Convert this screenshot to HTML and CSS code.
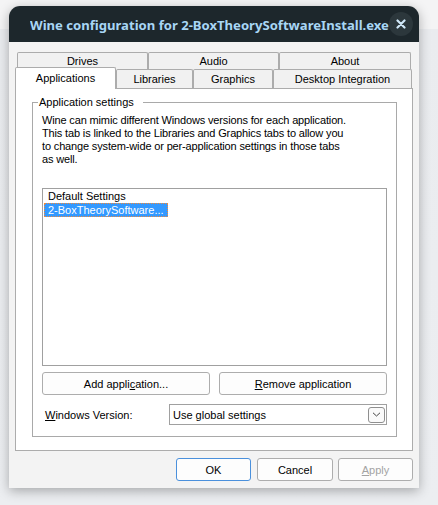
FILE: index.html
```
<!DOCTYPE html>
<html>
<head>
<meta charset="utf-8">
<link rel="stylesheet" href="styles.css">
</head>
<body>
<div class="desk">
  <div class="window">
    <div class="titlebar">
      <span class="title">Wine configuration for 2-BoxTheorySoftwareInstall.exe</span>
      <span class="close"><svg width="10" height="10" viewBox="0 0 10 10"><path d="M1.5 1.5 L8.5 8.5 M8.5 1.5 L1.5 8.5" stroke="#cfe6f7" stroke-width="2.2" stroke-linecap="round"/></svg></span>
    </div>
    <div class="content">
      <div class="tabs">
        <div class="tabrow back">
          <div class="tab tab-back w131">Drives</div>
          <div class="tab tab-back w131">Audio</div>
          <div class="tab tab-back w132">About</div>
        </div>
        <div class="tabrow front">
          <div class="tab tab-front sel w101">Applications</div>
          <div class="tab tab-front w77">Libraries</div>
          <div class="tab tab-front w80">Graphics</div>
          <div class="tab tab-front w139">Desktop Integration</div>
        </div>
      </div>
      <div class="panel">
        <div class="group">
          <span class="legend">Application settings</span>
          <p class="desc">Wine can mimic different Windows versions for each application.<br>This tab is linked to the Libraries and Graphics tabs to allow you<br>to change system-wide or per-application settings in those tabs<br>as well.</p>
          <div class="listbox">
            <div class="item">Default Settings</div>
            <div class="item selected">2-BoxTheorySoftware...</div>
          </div>
          <div class="btnrow">
            <button class="btn wide">Add appli<u>c</u>ation...</button>
            <button class="btn wide"><u>R</u>emove application</button>
          </div>
          <div class="verrow">
            <span class="verlabel"><u>W</u>indows Version:</span>
            <div class="combo">
              <span class="combotext">Use global settings</span>
              <span class="dropbtn"><svg width="9" height="5" viewBox="0 0 9 5"><path d="M1 0.8 L4.5 4 L8 0.8" fill="none" stroke="#444" stroke-width="1"/></svg></span>
            </div>
          </div>
        </div>
      </div>
      <div class="footer">
        <button class="btn ok">OK</button>
        <button class="btn cancel">Cancel</button>
        <button class="btn apply"><u>A</u>pply</button>
      </div>
    </div>
  </div>
</div>
</body>
</html>
```
FILE: styles.css
```
html, body {
  margin: 0;
  padding: 0;
}
body {
  width: 438px;
  height: 505px;
  overflow: hidden;
  background: linear-gradient(#f4f4f5 0, #f4f4f5 29px, #eaecef 29px, #eceef1 100%);
  font-family: "Liberation Sans", Arial, sans-serif;
  font-size: 11px;
  color: #000;
}
.desk {
  padding: 6px 0 0 9px;
}
.window {
  width: 410px;
  height: 482px;
  background: #f3f3f3;
  border-radius: 11px 11px 0 0;
  box-shadow: 0 3px 12px rgba(0, 0, 0, 0.3);
  display: flex;
  flex-direction: column;
  overflow: hidden;
}
.titlebar {
  height: 36px;
  flex: none;
  background: #1d272c;
  display: flex;
  align-items: center;
  padding: 0 6px 0 21px;
}
.title {
  flex: 1;
  color: #a8d6f5;
  font-family: "Noto Sans", sans-serif;
  font-weight: 700;
  font-size: 13.1px;
  white-space: nowrap;
  overflow: hidden;
  padding-top: 1px;
}
.close {
  width: 24px;
  height: 24px;
  border-radius: 50%;
  background: #2c373c;
  display: flex;
  align-items: center;
  justify-content: center;
}
.content {
  padding: 10px 0 0 6px;
}
.tabrow {
  display: flex;
}
.tabrow.back {
  margin-left: 2px;
  height: 17px;
}
.tabrow.front {
  height: 19px;
  align-items: flex-end;
}
.tab {
  box-sizing: border-box;
  border: 1px solid #acacac;
  border-bottom: none;
  border-radius: 2px 2px 0 0;
  background: #f1f1f1;
  text-align: center;
  white-space: nowrap;
}
.tab-back {
  height: 17px;
  line-height: 16px;
}
.tab-front {
  height: 19px;
  line-height: 18px;
}
.tab-front.sel {
  height: 22px;
  line-height: 20px;
  margin-bottom: -1px;
  background: #fff;
  position: relative;
  z-index: 1;
}
.w131 { width: 131px; }
.w132 { width: 132px; }
.w101 { width: 101px; }
.w77 { width: 77px; }
.w80 { width: 80px; }
.w139 { width: 139px; }
.panel {
  box-sizing: border-box;
  width: 398px;
  height: 363px;
  border: 1px solid #acacac;
  background: #fff;
  padding: 13px 15px 13px 16px;
}
.group {
  box-sizing: border-box;
  height: 335px;
  border: 1px solid #a9a9a9;
  position: relative;
  padding: 11px 9px 11px 9px;
}
.legend {
  position: absolute;
  top: -7px;
  left: 5px;
  line-height: 13px;
  padding: 0 9px 0 1px;
  background: #fff;
}
.desc {
  margin: 0;
  line-height: 13px;
  white-space: nowrap;
  letter-spacing: -0.15px;
}
.listbox {
  box-sizing: border-box;
  margin-top: 22px;
  height: 178px;
  border: 1px solid #a0a0a0;
  background: #fff;
  padding: 0 1px;
}
.item {
  box-sizing: border-box;
  width: 124px;
  line-height: 12px;
  border: 1px solid transparent;
  padding: 0 3px;
  white-space: nowrap;
  overflow: hidden;
}
.item.selected {
  background: #3399ff;
  color: #fff;
  border: 1px dotted #f08a3c;
}
.btnrow {
  display: flex;
  gap: 9px;
  margin-top: 6px;
}
.btn {
  box-sizing: border-box;
  height: 23px;
  border: 1px solid #adadad;
  border-radius: 3px;
  background: #fdfdfd;
  font-family: "Liberation Sans", Arial, sans-serif;
  font-size: 11px;
  color: #000;
  padding: 0;
  text-align: center;
}
.btn.wide {
  width: 168px;
}
.verrow {
  display: flex;
  align-items: center;
  height: 21px;
  margin-top: 9px;
}
.verlabel {
  box-sizing: border-box;
  width: 127px;
  padding-left: 3px;
}
.combo {
  box-sizing: border-box;
  width: 218px;
  height: 21px;
  border: 1px solid #a0a0a0;
  background: #fff;
  display: flex;
  align-items: center;
  padding-left: 3px;
}
.combotext {
  flex: 1;
}
.dropbtn {
  box-sizing: border-box;
  width: 17px;
  height: 16px;
  margin-right: 1px;
  border: 1px solid #8f8f8f;
  border-radius: 3px;
  background: #fafafa;
  display: flex;
  align-items: center;
  justify-content: center;
}
.footer {
  display: flex;
  justify-content: flex-end;
  padding: 7px 6px 0 0;
}
.btn.ok {
  width: 75px;
  border-color: #4a90dc;
}
.btn.cancel {
  width: 76px;
  margin-left: 6px;
}
.btn.apply {
  width: 75px;
  margin-left: 5px;
  color: #a3a3a3;
}
```
